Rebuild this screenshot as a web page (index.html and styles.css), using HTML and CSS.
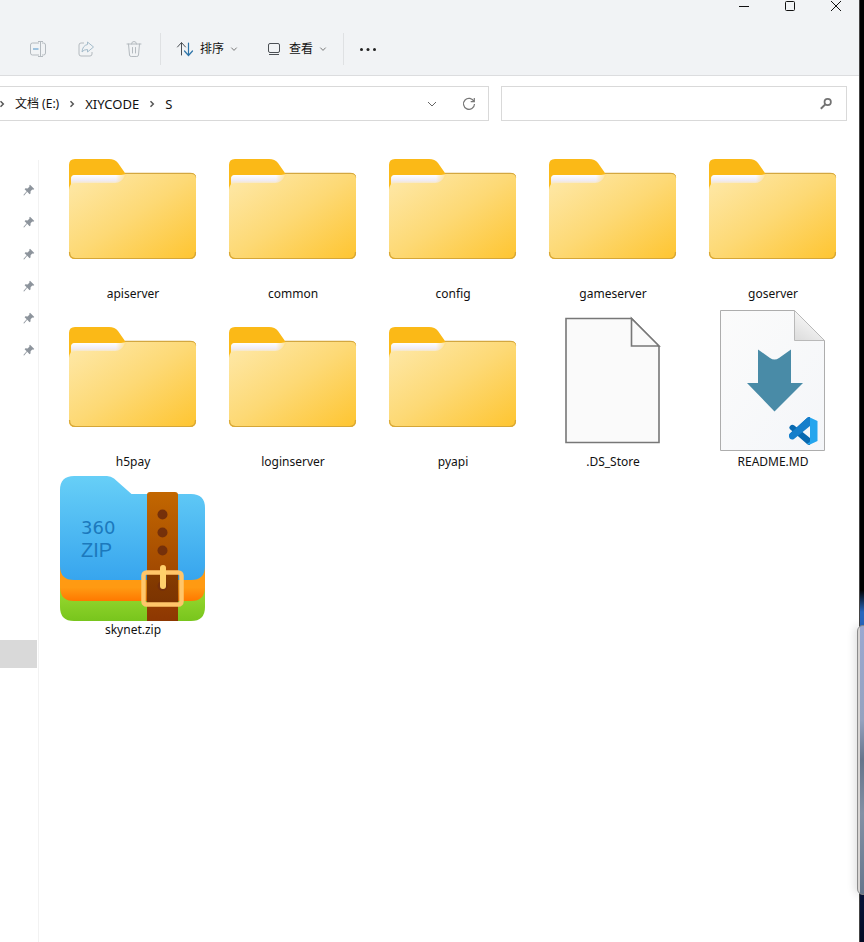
FILE: index.html
```html
<!DOCTYPE html>
<html lang="zh-CN">
<head>
<meta charset="utf-8">
<meta name="viewport" content="width=device-width, initial-scale=1">
<title>S</title>
<link rel="stylesheet" href="styles.css">
</head>
<body>
<svg class="defs" width="0" height="0" aria-hidden="true">
  <defs>
    <linearGradient id="folderFront" x1="0" y1="0" x2="1" y2="1">
      <stop offset="0" stop-color="#fee9ab"/><stop offset=".5" stop-color="#fdd975"/><stop offset="1" stop-color="#fec531"/>
    </linearGradient>
    <linearGradient id="folderPaper" x1="0" y1="0" x2="0" y2="1">
      <stop offset="0" stop-color="#ffffff"/><stop offset=".6" stop-color="#f0ebf2"/><stop offset="1" stop-color="#fde7a8"/>
    </linearGradient>
    <linearGradient id="paperFade" x1="0" x2="1">
      <stop offset="0" stop-color="#fedb7c" stop-opacity="0"/><stop offset="1" stop-color="#fedf8c"/>
    </linearGradient>
    <symbol id="folder" viewBox="0 0 146 146">
      <path d="M9 50V25q0-6 6-6h34q6 0 9 4l7 10h66q5 0 5 5v75q0 6-6 6H15q-6 0-6-6z" fill="#fbb917"/>
      <path d="M65 33.500h65q5 0 5.500 4" fill="none" stroke="#d3a740" stroke-width="1.500"/>
      <path d="M11 55V39q0-4 4-4h46l5-1h65q5 0 5 5v73q0 6-6 6H15q-6 0-6-6V50q0-3 2-6z" fill="url(#folderFront)"/>
      <path d="M11 43.500V39q0-4 4-4h50q-3 8-10 8H17q-4 0-6 1.500z" fill="url(#folderPaper)"/>
      <path d="M56 35h11q-4 8-11 8z" fill="url(#paperFade)"/>
      <path d="M9.500 112q0 6.500 6 6.500h114q6 0 6-6.500" fill="none" stroke="#d5a637" stroke-width="1.200"/>
    </symbol>
    <symbol id="pin" viewBox="0 0 12 12">
      <path d="M7 .7 11.300 5 10.200 5.700 9.300 5.500 7.600 7.300 7.500 9.600 6.600 10.200 4.200 7.800 1.100 11.400.5 11.300.6 10.700 3.700 7.300 1.600 5.200 2.400 4.300 4.600 4.400 6.500 2.600 6.300 1.500z" fill="#8d949c"/>
    </symbol>
    <symbol id="chevron" viewBox="0 0 8 8"><path d="m1.300 2.600 2.700 2.800 2.700-2.800" fill="none" stroke="#777" stroke-width="1"/></symbol>
    <symbol id="crumb" viewBox="0 0 8 8"><path d="m2.500 1.200 2.800 2.800-2.800 2.800" fill="none" stroke="#555" stroke-width="1.500"/></symbol>
  </defs>
</svg>

<main class="window">
  <header class="chrome">
    <div class="titlebar">
      <button aria-label="最小化"><svg width="12" height="12"><path d="M1 6.500h10" stroke="#111" fill="none"/></svg></button>
      <button aria-label="最大化"><svg width="12" height="12"><rect x="1.500" y="1.500" width="9" height="9" rx="1" stroke="#111" fill="none"/></svg></button>
      <button aria-label="关闭"><svg width="12" height="12"><path d="m1 1 10 10M11 1 1 11" stroke="#111" fill="none"/></svg></button>
    </div>
    <div class="toolbar">
      <button class="tool" aria-label="重命名">
        <svg width="18" height="18" fill="none" stroke="#b4babf"><path d="M10 3H3.500Q1.500 3 1.500 5v8q0 2 2 2H10M13 3h1.500q2 0 2 2v8q0 2-2 2H13M11.500 1.500v15M9 1.500h5M9 16.500h5"/><path d="M4 9h5.500" stroke="#9fc3df" stroke-width="2"/></svg>
      </button>
      <button class="tool" aria-label="共享">
        <svg width="18" height="18" fill="none" stroke="#b4babf" stroke-linejoin="round"><path d="M7 3H4Q2 3 2 5v9q0 2 2 2h9q2 0 2-2v-2"/><path d="M10.500 2 16.500 7l-6 5V9.500Q6.500 9.500 5 12q.5-6.500 5.500-7.500z" stroke="#a5bccb"/></svg>
      </button>
      <button class="tool" aria-label="删除">
        <svg width="18" height="18" fill="none" stroke="#b4babf" stroke-linecap="round"><path d="M2 4h14M6.500 4q0-2.500 2.500-2.500T11.500 4M3.500 4l1 11q.2 1.500 1.700 1.500h5.600q1.500 0 1.700-1.500l1-11M7.500 7.500v5.500M10.500 7.500v5.500"/></svg>
      </button>
      <span class="divider"></span>
      <button class="menu">
        <svg width="18" height="18" fill="none" stroke-linecap="round"><path d="M5.500 15V3M1.500 7l4-4.500 4 4.500" stroke="#4b4f54"/><path d="M12.500 3v12M8.500 11l4 4.500 4-4.500" stroke="#2e74a8" stroke-width="1.200"/></svg>
        <span>排序</span><svg class="caret"><use href="#chevron"/></svg>
      </button>
      <button class="menu">
        <svg width="18" height="18" fill="none" stroke="#4b4f54"><rect x="3.500" y="3.500" width="11" height="9" rx="1.500"/><path d="M4 14.500h10"/></svg>
        <span>查看</span><svg class="caret"><use href="#chevron"/></svg>
      </button>
      <span class="divider"></span>
      <button class="tool more" aria-label="更多"><svg width="18" height="18" fill="#222"><circle cx="2.500" cy="9.500" r="1.500"/><circle cx="9" cy="9.500" r="1.500"/><circle cx="15.500" cy="9.500" r="1.500"/></svg></button>
    </div>
  </header>

  <div class="location">
    <nav class="address" aria-label="路径">
      <svg class="sep"><use href="#crumb"/></svg><a href="#">文档 (E:)</a>
      <svg class="sep"><use href="#crumb"/></svg><a href="#">XIYCODE</a>
      <svg class="sep"><use href="#crumb"/></svg><a href="#">S</a>
      <button class="history" aria-label="历史"><svg width="12" height="12"><path d="m2 4 4 4 4-4" fill="none" stroke="#666"/></svg></button>
      <button aria-label="刷新"><svg width="14" height="14" fill="none" stroke="#777" stroke-width="1.200"><path d="M12 4.500A5.500 5.500 0 1 0 12.500 7M12.300 1v3.700H8.700"/></svg></button>
    </nav>
    <div class="search">
      <input type="text" aria-label="搜索">
      <button aria-label="搜索"><svg width="14" height="14" fill="none" stroke="#737373"><circle cx="8.700" cy="5" r="3.200" stroke-width="1.700"/><path d="M6.300 7.400 1.800 11.800" stroke-width="2"/></svg></button>
    </div>
  </div>

  <div class="content">
    <aside class="sidebar">
      <ul class="pins">
        <li><svg><use href="#pin"/></svg></li><li><svg><use href="#pin"/></svg></li><li><svg><use href="#pin"/></svg></li>
        <li><svg><use href="#pin"/></svg></li><li><svg><use href="#pin"/></svg></li><li><svg><use href="#pin"/></svg></li>
      </ul>
      <div class="selected"></div>
    </aside>
    <ul class="files">
      <li><svg><use href="#folder"/></svg><span>apiserver</span></li>
      <li><svg><use href="#folder"/></svg><span>common</span></li>
      <li><svg><use href="#folder"/></svg><span>config</span></li>
      <li><svg><use href="#folder"/></svg><span>gameserver</span></li>
      <li><svg><use href="#folder"/></svg><span>goserver</span></li>
      <li><svg><use href="#folder"/></svg><span>h5pay</span></li>
      <li><svg><use href="#folder"/></svg><span>loginserver</span></li>
      <li><svg><use href="#folder"/></svg><span>pyapi</span></li>
      <li>
        <svg viewBox="0 0 146 146"><path d="M26 10.500h65.500l27.500 28v96H26z" fill="#fafafa" stroke="#777" stroke-width="1.600"/><path d="M91.500 10.500V38H119z" fill="#fafafa" stroke="#777" stroke-width="1.600"/></svg>
        <span>.DS_Store</span>
      </li>
      <li>
        <svg viewBox="0 0 146 146">
          <defs>
            <linearGradient id="sheet" x1="0" y1="0" x2="1" y2="1"><stop offset="0" stop-color="#fbfbfb"/><stop offset="1" stop-color="#f4f6f9"/></linearGradient>
            <linearGradient id="fold" x1=".8" y1="0" x2=".2" y2="1"><stop offset="0" stop-color="#fff"/><stop offset="1" stop-color="#dedede"/></linearGradient>
          </defs>
          <path d="M20.500 2.500h74l30 30v110h-104z" fill="url(#sheet)" stroke="#adadad"/>
          <path d="M94.500 2.500v30h30z" fill="url(#fold)" stroke="#b9b9b9"/>
          <path d="M58 41.500 70 50q4.500 3 9 0l12-8.500V75h12L74.500 103.500 47 75h11z" fill="#498ba7"/>
          <path d="M90 130.500 110 114.500V109q-1.500-.5-3 1L89.800 125.500q-1.300 1.500 0 3z" fill="#0e74c4"/>
          <path d="M90 118q2-2 4-.8L110 130v7q-2 .2-3-1L89.800 121q-1.200-1.500.2-3z" fill="#0869b0"/>
          <path d="M90 130.800q2 1.400 4 .2L110 118v-9q-1.500-.5-3 1L89.600 126q-1.500 2 .4 4.800z" fill="#167fcb"/>
          <path d="M110 109.500 117.500 113v20l-7.500 3.500q-1.500.2-3-1.500 3 .5 3-2z" fill="#24a5ee"/>
        </svg>
        <span>README.MD</span>
      </li>
      <li>
        <svg viewBox="0 0 146 146">
          <defs>
            <linearGradient id="zipBlue" x1="0" y1="0" x2="0" y2="1"><stop offset="0" stop-color="#67cff7"/><stop offset="1" stop-color="#37a5ee"/></linearGradient>
            <linearGradient id="zipOrange" x1="0" y1="0" x2="0" y2="1"><stop offset=".7" stop-color="#ff9a12"/><stop offset="1" stop-color="#ff7800"/></linearGradient>
            <linearGradient id="zipGreen" x1="0" y1="0" x2="0" y2="1"><stop offset=".5" stop-color="#95d72e"/><stop offset="1" stop-color="#78c51d"/></linearGradient>
            <linearGradient id="strap" x1="0" y1="0" x2="0" y2="1"><stop offset="0" stop-color="#c36700"/><stop offset="1" stop-color="#8d3702"/></linearGradient>
          </defs>
          <path d="M0 90h145v41q0 14-14 14H14q-14 0-14-14z" fill="url(#zipGreen)"/>
          <path d="M0 80h145v31q0 14-14 14H14q-14 0-14-14z" fill="url(#zipOrange)"/>
          <path d="M14 0h33q4 0 7 2.500L71.500 18H131q14 0 14 14v58q0 14-14 14H14Q0 104 0 90V14Q0 0 14 0z" fill="url(#zipBlue)"/>
          <text class="brand" x="21" y="58">360</text>
          <text class="format" x="21" y="81">ZIP</text>
          <path d="M87 19q0-3 3-3h25q3 0 3 3v126H87z" fill="url(#strap)"/>
          <path d="M85 97h35v31H85z" fill="#000" fill-opacity=".17"/>
          <g fill="#75300a"><circle cx="102.500" cy="38.500" r="5"/><circle cx="102.500" cy="56.500" r="5"/><circle cx="102.500" cy="74.500" r="5"/><circle cx="102.500" cy="110" r="5"/></g>
          <rect x="83.500" y="96.500" width="38" height="32" rx="3" fill="none" stroke="#ffc66a" stroke-width="4.500"/>
          <path d="M103 92v18" stroke="#ffd06b" stroke-width="6" stroke-linecap="round"/>
        </svg>
        <span>skynet.zip</span>
      </li>
    </ul>
  </div>
</main>
<div class="desktop"><div class="behind"></div></div>
</body>
</html>
```
FILE: styles.css
```css
* { box-sizing: border-box; }

body {
  margin: 0;
  min-height: 100vh;
  display: flex;
  overflow-x: hidden;
  background: #fff;
  color: #111;
  font: 12px/16px "Noto Sans", "Noto Sans CJK SC", sans-serif;
}

svg { display: block; flex: none; }
ul { list-style: none; margin: 0; padding: 0; }
a { color: inherit; text-decoration: none; }
button {
  display: flex;
  align-items: center;
  justify-content: center;
  margin: 0;
  padding: 0;
  border: 0;
  background: none;
  color: inherit;
  font: inherit;
}
.defs { position: absolute; }

.window { flex: 1; min-width: 0; display: flex; flex-direction: column; }

.chrome {
  height: 76px;
  background: #f1f3f5;
  border-bottom: 1px solid #dcdddf;
}
.titlebar { display: flex; justify-content: flex-end; height: 24px; }
.titlebar button { width: 46px; height: 12px; }

.toolbar { display: flex; align-items: center; height: 50px; padding-left: 14px; }
.tool { width: 48px; height: 32px; }
.menu { gap: 6px; height: 32px; padding-left: 15px; }
.menu + .menu { padding-left: 27px; }
.menu + .divider { margin-left: 16px; }
.caret { width: 8px; height: 8px; }
.divider { width: 1px; height: 32px; margin-left: 2px; background: #dfe1e3; }

.location {
  display: grid;
  grid-template-columns: 489fr 346fr;
  gap: 12px;
  padding: 10px 12px 0 0;
}
.address, .search {
  display: flex;
  align-items: center;
  min-width: 0;
  height: 35px;
  border: 1px solid #d9d9d9;
  background: #fff;
}
.address { border-left: 0; padding-right: 12px; }
.address a { margin: 0 9px; }
.address .sep { width: 8px; height: 8px; }
.address .sep:first-child { margin-left: -2px; }
.address .history { margin-left: auto; margin-right: 24px; }
.address a { font-size: 13px; }
.address a:first-of-type { font-size: 12px; }
.search { padding-right: 13px; }
.search input {
  flex: 1;
  min-width: 0;
  height: 100%;
  border: 0;
  outline: 0;
  padding: 0 10px;
  background: none;
  font: inherit;
}

.content { flex: 1; display: flex; padding-top: 19px; }
.sidebar {
  width: 39px;
  margin-top: 20px;
  border-right: 1px solid #f2f2f2;
}
.pins { padding-top: 14px; }
.pins li { display: flex; align-items: center; height: 32px; padding-left: 23px; }
.pins svg { width: 12px; height: 12px; }
.selected { height: 28px; margin: 274px 1px 0 0; background: #d9d9d9; }

.files {
  flex: 1;
  display: grid;
  grid-template-columns: repeat(auto-fill, 160px);
  grid-auto-rows: 168px;
  align-content: start;
  padding-left: 14px;
}
.files li { display: flex; flex-direction: column; align-items: center; }
.files li > svg { width: 146px; height: 146px; }
.brand { font: 18px "DejaVu Sans", sans-serif; fill: #1c79bd; }
.format { font: 20px "Liberation Sans", sans-serif; fill: #1c79bd; }

.desktop {
  position: relative;
  width: 5px;
  border-left: 1px solid #444;
  background: linear-gradient(#000 590px, #2766bd 612px, #2766bd 640px, #07133b 890px, #020b25);
}
.behind {
  position: absolute;
  top: 625px;
  left: -3px;
  width: 12px;
  height: 270px;
  border: 1px solid #8b8b8b;
  border-radius: 6px;
  background: linear-gradient(90deg, #d8d5d3 2px, transparent 2px), linear-gradient(#9aa8d1, #95a2bf 35%, #66748b 50%, #8390a5 70%, #65758c);
  box-shadow: -2px 0 8px #0002;
}
```
